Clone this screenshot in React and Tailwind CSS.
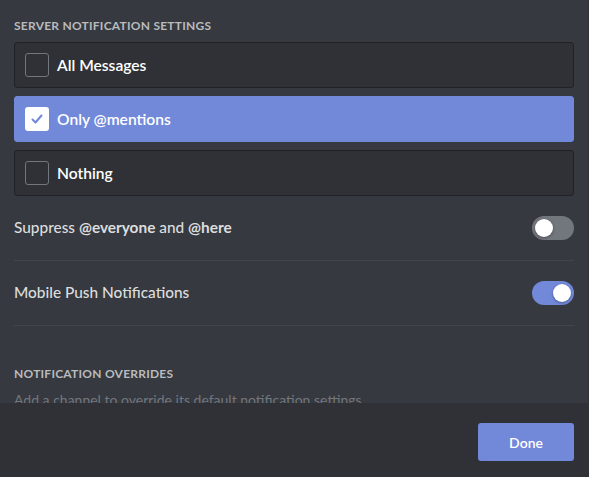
import { useState } from 'react'

const OPTIONS = [
  { key: 'all', label: 'All Messages' },
  { key: 'mentions', label: 'Only @mentions' },
  { key: 'nothing', label: 'Nothing' },
]

function Toggle({ on, onChange }) {
  return (
    <button
      onClick={() => onChange(!on)}
      className={`relative w-[42px] h-[24px] rounded-full shrink-0 ${on ? 'bg-[#7289da]' : 'bg-[#72767d]'}`}
    >
      <span
        className={`absolute top-[3px] w-[18px] h-[18px] rounded-full bg-white shadow-[0_1px_3px_rgba(0,0,0,0.35)] ${
          on ? 'right-[3px]' : 'left-[3px]'
        }`}
      />
    </button>
  )
}

export default function App() {
  const [level, setLevel] = useState('mentions')
  const [suppress, setSuppress] = useState(false)
  const [mobile, setMobile] = useState(true)

  return (
    <div
      className="w-[589px] h-[477px] flex flex-col bg-[#36393f] border-r border-[#2f3136] overflow-hidden"
      style={{ fontFamily: 'Lato, "Noto Sans", sans-serif' }}
    >
      {/* ── Scroll area ─────────────────────────────── */}
      <div className="h-[403px] shrink-0 overflow-hidden px-[14px] pt-[19px]">
        <h2 className="text-[12px] font-bold uppercase tracking-[0.02em] text-[#b9bbbe] leading-[14px]">
          Server Notification Settings
        </h2>

        <div className="mt-[9px] flex flex-col gap-[8px]">
          {OPTIONS.map((o) => {
            const active = level === o.key
            return (
              <button
                key={o.key}
                onClick={() => setLevel(o.key)}
                className={`h-[46px] w-full flex items-center gap-[8px] px-[10px] rounded-[3px] border text-left ${
                  active ? 'bg-[#7289da] border-[#7289da]' : 'bg-[#2f3136] border-[#202225]'
                }`}
              >
                <span
                  className={`w-[24px] h-[24px] rounded-[3px] flex items-center justify-center shrink-0 ${
                    active ? 'bg-white' : 'border border-[#72767d]'
                  }`}
                >
                  {active && (
                    <svg width="14" height="14" viewBox="0 0 14 14" fill="none">
                      <path d="M2.5 7.5 L5.5 10.5 L11.5 3.5" stroke="#7289da" strokeWidth="2" strokeLinecap="round" strokeLinejoin="round" />
                    </svg>
                  )}
                </span>
                <span className="text-[15.6px] font-semibold text-white leading-[18px] -mt-[1px]">{o.label}</span>
              </button>
            )
          })}
        </div>

        <div className="mt-[20px] flex items-center justify-between h-[24px]">
          <span className="text-[15.4px] text-[#dcddde] font-medium">
            Suppress <b className="font-bold">@everyone</b> and <b className="font-bold">@here</b>
          </span>
          <Toggle on={suppress} onChange={setSuppress} />
        </div>
        <div className="mt-[20px] h-px bg-[#42454a]" />

        <div className="mt-[20px] flex items-center justify-between h-[24px]">
          <span className="text-[15.4px] text-[#dcddde] font-medium">Mobile Push Notifications</span>
          <Toggle on={mobile} onChange={setMobile} />
        </div>
        <div className="mt-[20px] h-px bg-[#42454a]" />

        <h2 className="mt-[41px] text-[12px] font-bold uppercase tracking-[0.02em] text-[#b9bbbe] leading-[14px]">
          Notification Overrides
        </h2>
        <p className="mt-[10px] text-[14px] text-[#72767d] leading-[18px]">
          Add a channel to override its default notification settings
        </p>
      </div>

      {/* ── Footer ──────────────────────────────────── */}
      <div className="flex-1 bg-[#2f3136] flex items-start justify-end px-[14px] pt-[20px]">
        <button className="w-[96px] h-[38px] rounded-[3px] bg-[#7289da] text-white text-[14px] font-semibold">
          Done
        </button>
      </div>
    </div>
  )
}
